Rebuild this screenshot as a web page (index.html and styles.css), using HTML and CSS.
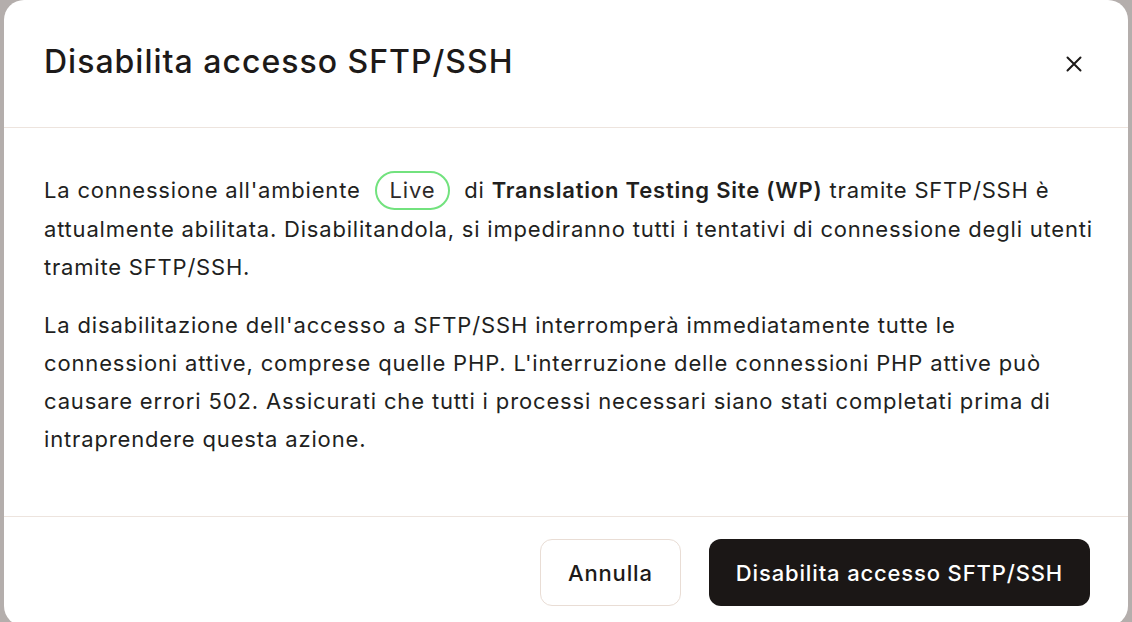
FILE: index.html
```html
<!DOCTYPE html>
<html lang="it">
<head>
  <meta charset="UTF-8" />
  <meta name="viewport" content="width=device-width, initial-scale=1" />
  <title>Disabilita accesso SFTP/SSH</title>
  <link rel="stylesheet" href="styles.css">
</head>
<body>

  <div class="modal">
    <div class="modal-header">
      <h1>Disabilita accesso SFTP/SSH</h1>
      <button class="close-btn" aria-label="Chiudi">
        <svg width="16" height="16" viewBox="0 0 16 16">
          <path d="M1.5 1.5 L14.5 14.5 M14.5 1.5 L1.5 14.5" stroke="#1d1a19" stroke-width="2" stroke-linecap="round" />
        </svg>
      </button>
    </div>

    <div class="modal-body">
      <p>
        La connessione all'ambiente <span class="pill">Live</span> di
        <strong>Translation Testing Site (WP)</strong> tramite SFTP/SSH è attualmente abilitata.
        Disabilitandola, si impediranno tutti i tentativi di connessione degli utenti tramite SFTP/SSH.
      </p>
      <p class="warning">
        La disabilitazione dell'accesso a SFTP/SSH interromperà immediatamente tutte le connessioni
        attive, comprese quelle PHP. L'interruzione delle connessioni PHP attive può causare errori 502.
        Assicurati che tutti i processi necessari siano stati completati prima di intraprendere questa azione.
      </p>
    </div>

    <div class="modal-footer">
      <button class="btn btn-secondary">Annulla</button>
      <button class="btn btn-primary">Disabilita accesso SFTP/SSH</button>
    </div>
  </div>

</body>
</html>
```

FILE: styles.css
```css
html, body {
  height: 100%;
}
body {
  margin: 0;
  background: #b4aeac;
  font-family: 'Inter', 'Noto Sans', sans-serif;
  color: #1d1a19;
  overflow: hidden;
}
.modal {
  margin: 0 4px;
  height: 626px;
  background: #fff;
  border-radius: 20px;
  display: flex;
  flex-direction: column;
}
.modal-header {
  height: 128px;
  padding: 0 40px;
  display: flex;
  align-items: center;
  justify-content: space-between;
  border-bottom: 1.5px solid #ede4de;
  box-sizing: border-box;
}
h1 {
  margin: 0 0 4px;
  font-size: 32px;
  font-weight: 500;
  letter-spacing: 1px;
}
.close-btn {
  background: none;
  border: none;
  padding: 0;
  margin-right: 6px;
  width: 16px;
  height: 16px;
  cursor: pointer;
}
.modal-body {
  padding: 43px 34px 0 40px;
  height: 389px;
  box-sizing: border-box;
  border-bottom: 1.5px solid #ede4de;
}
.modal-body p {
  margin: 0 0 20px;
  font-size: 22px;
  line-height: 38px;
  letter-spacing: 0.8px;
  color: #221f1e;
}
.modal-body p.warning {
  letter-spacing: 0.85px;
}
.modal-body strong {
  font-weight: 600;
}
.pill {
  display: inline-block;
  border: 2px solid #72e27e;
  border-radius: 20px;
  padding: 0 13px;
  line-height: 35px;
  margin: 0 7px;
  color: #2e2a29;
}
.modal-footer {
  display: flex;
  justify-content: flex-end;
  gap: 28px;
  padding: 22px 38px 0;
}
.btn {
  font-family: 'Inter', 'Noto Sans', sans-serif;
  font-size: 22px;
  font-weight: 500;
  letter-spacing: 0.85px;
  height: 67px;
  border-radius: 12px;
  padding: 0 27px;
  cursor: pointer;
}
.btn-secondary {
  background: #fff;
  color: #1d1a19;
  border: 1.5px solid #e9ddd5;
}
.btn-primary {
  background: #1b1716;
  color: #fff;
  border: none;
}
```
